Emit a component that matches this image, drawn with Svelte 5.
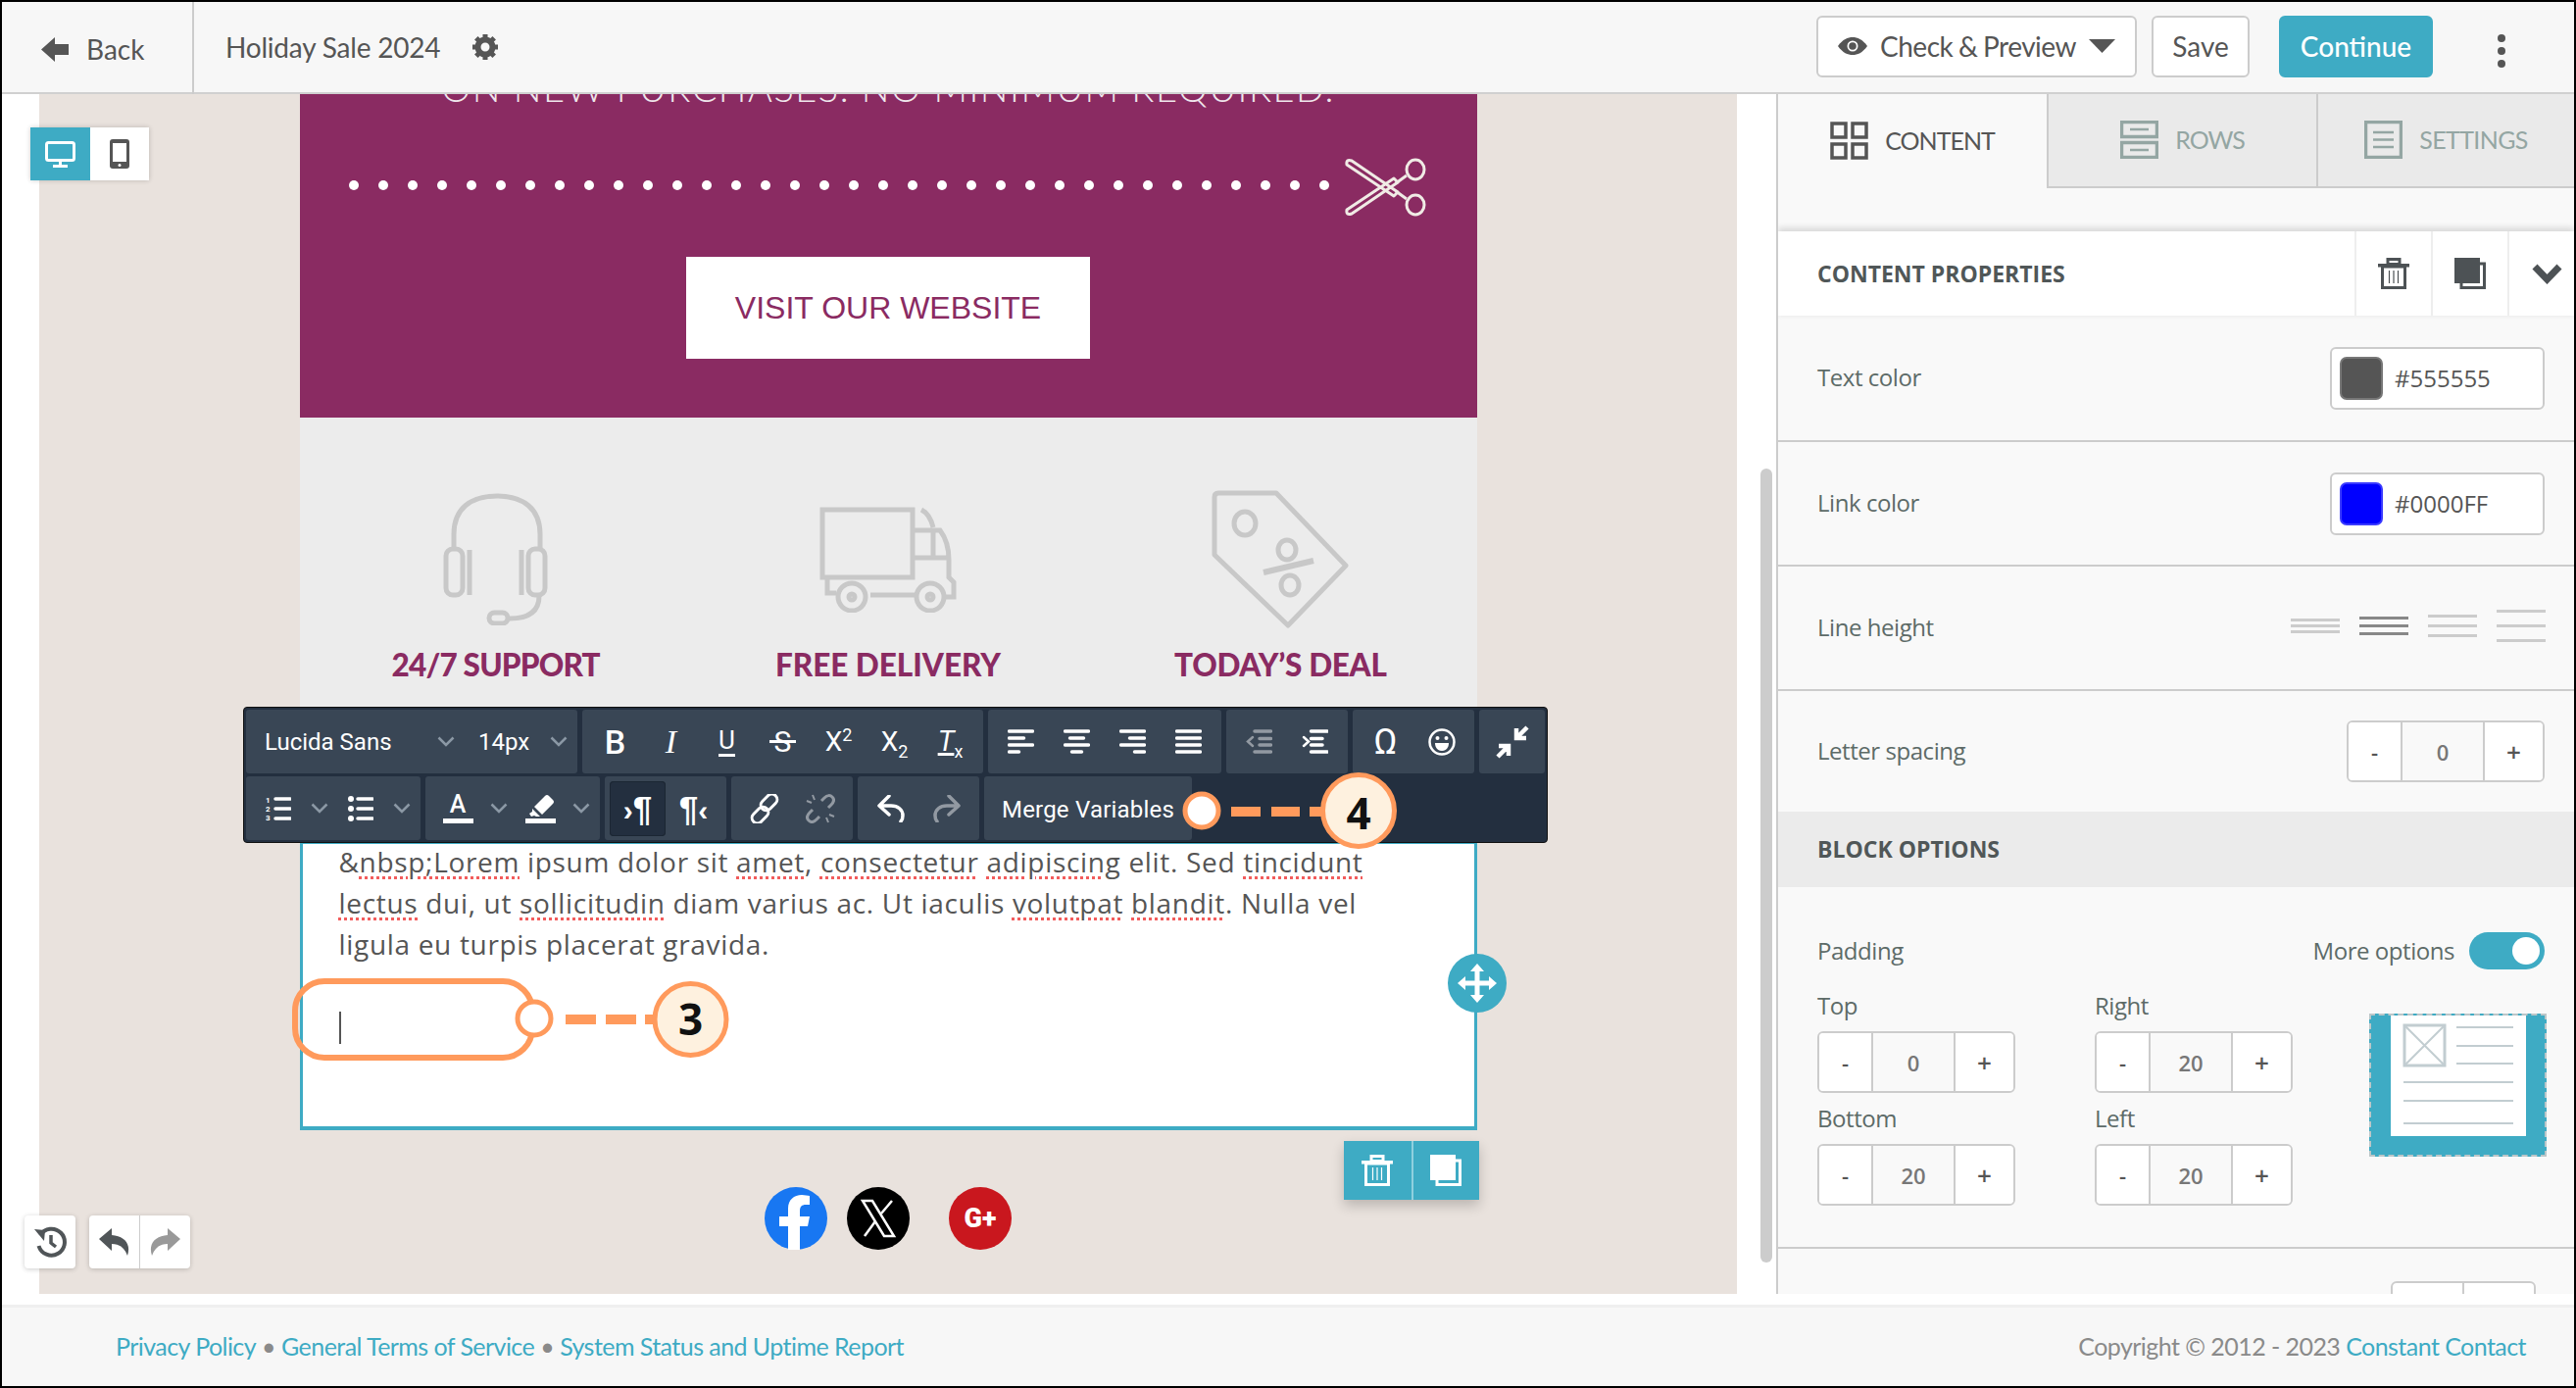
<script>
	const dots = Array.from({ length: 34 });
	const gearTeeth = [0, 45, 90, 135, 180, 225, 270, 315];

	// each icon is a list of [x1, x2] lines
	const alignIcons = [
		[[0, 27], [0, 18], [0, 27], [0, 13]],
		[[0, 27], [5, 22], [0, 27], [7, 20]],
		[[0, 27], [9, 27], [0, 27], [14, 27]],
		[[0, 27], [0, 27], [0, 27], [0, 27]]
	];

	const lineHeights = [
		{ gap: 3, active: false },
		{ gap: 5, active: true },
		{ gap: 7, active: false },
		{ gap: 12, active: false }
	];

	const paddingFields = [
		{ label: 'Top', value: 0 },
		{ label: 'Right', value: 20 },
		{ label: 'Bottom', value: 20 },
		{ label: 'Left', value: 20 }
	];
</script>

{#snippet chevron()}
	<svg class="chev" viewBox="0 0 18 11" width="18" height="11"><path d="M1.500 1.500 9 9l7.500-7.500" /></svg>
{/snippet}

{#snippet trash()}
	<svg viewBox="0 0 32 32" width="32" height="32" class="trash">
		<rect x="10" y="1.500" width="12" height="5" fill="none" stroke="currentColor" stroke-width="3" />
		<rect x="0" y="6" width="32" height="3.500" fill="currentColor" />
		<rect x="4.500" y="9" width="23" height="21.500" fill="none" stroke="currentColor" stroke-width="3" />
		<path d="M11.500 13v13M16 13v13M20.500 13v13" stroke="currentColor" stroke-width="1.200" />
	</svg>
{/snippet}

{#snippet copy()}
	<svg viewBox="0 0 32 32" width="32" height="32">
		<path d="M26 6h4.500v24.500H7V26" fill="none" stroke="currentColor" stroke-width="3" />
		<rect x="0" y="0" width="26" height="26" fill="currentColor" />
	</svg>
{/snippet}

{#snippet stepper(value)}
	<div class="stepper">
		<span class="step minus">-</span>
		<span class="step-value">{value}</span>
		<span class="step plus">+</span>
	</div>
{/snippet}

{#snippet replyArrow()}
	<svg viewBox="0 0 32 28" width="32" height="28"><path d="M0 11 13 0v7c13 1 20 9 16 21-3-8-8-12-16-12v7z" fill="currentColor" /></svg>
{/snippet}

<div class="app">
	<header class="topbar">
		<a class="back">
			<svg viewBox="0 0 28 25" width="28" height="25"><path d="M0 12.500 14 0v7h14v11H14v7z" fill="#555" /></svg>
			Back
		</a>
		<div class="title">
			<span>Holiday Sale 2024</span>
			<svg viewBox="0 0 26 26" width="26" height="26">
				<circle cx="13" cy="13" r="7.500" fill="none" stroke="#555" stroke-width="6" />
				{#each gearTeeth as deg}
					<rect x="10.500" y="0" width="5" height="5" fill="#555" transform="rotate({deg} 13 13)" />
				{/each}
			</svg>
		</div>
		<div class="actions">
			<button class="btn preview">
				<svg viewBox="0 0 30 18" width="30" height="18">
					<path d="M0 9C5 2 10 0 15 0s10 2 15 9c-5 7-10 9-15 9S5 16 0 9z" fill="#555" />
					<circle cx="15" cy="9" r="5.500" fill="#fff" />
					<circle cx="15" cy="9" r="3.800" fill="#555" />
				</svg>
				<span class="preview-label">Check &amp; Preview</span>
				<svg viewBox="0 0 27 14" width="27" height="14"><path d="M0 0h27L13.500 14z" fill="#555" /></svg>
			</button>
			<button class="btn save">Save</button>
			<button class="btn continue">Continue</button>
			<div class="kebab"><i></i><i></i><i></i></div>
		</div>
	</header>

	<div class="main">
		<div class="gutter-left"></div>

		<div class="canvas">
			<div class="email">
				<section class="coupon">
					<p class="coupon-text">ON NEW PURCHASES. NO MINIMUM REQUIRED.</p>
					<div class="cut-line">
						<div class="dots">
							{#each dots as _}<i></i>{/each}
						</div>
						<svg viewBox="0 0 87 62" width="87" height="62" class="scissors">
							<path d="M4 8Q3 2 9 4L56 36 52 40zM4 54Q3 60 9 58L56 26 52 22z" fill="none" stroke="#f0ebe5" stroke-width="3" stroke-linejoin="round" />
							<path d="M54 27 65 19M54 35 65 43" stroke="#f0ebe5" stroke-width="3" />
							<ellipse cx="74" cy="13" rx="9" ry="10" fill="none" stroke="#f0ebe5" stroke-width="3" />
							<ellipse cx="74" cy="49" rx="9" ry="10" fill="none" stroke="#f0ebe5" stroke-width="3" />
						</svg>
					</div>
					<a class="visit">VISIT OUR WEBSITE</a>
				</section>

				<section class="perks">
					<div class="perk">
						<div class="perk-icon">
							<svg viewBox="0 0 107 135" width="107" height="135" class="line-icon">
								<path d="M11 57V42C11 16 28 3 55 3s44 13 44 39v15" />
								<rect x="3" y="57" width="17" height="47" rx="7" />
								<path d="M27 58v46M80 58v46" />
								<rect x="87" y="57" width="17" height="47" rx="7" />
								<path d="M98 105c0 15-10 23-30 23" />
								<rect x="47" y="122" width="19" height="11" rx="5.500" />
							</svg>
						</div>
						<h3>24/7 SUPPORT</h3>
					</div>
					<div class="perk">
						<div class="perk-icon">
							<svg viewBox="0 0 140 108" width="140" height="108" class="line-icon">
								<rect x="3" y="3" width="92" height="69" />
								<path d="M104 3c6 3 10 10 12 18M95 24h28c6 8 9 18 9 30v18l5 5v15h-10M95 52h37M116 24v28M8 72v16h9M52 90h48" />
								<ellipse cx="33" cy="92" rx="14" ry="14" />
								<ellipse cx="113" cy="92" rx="14" ry="14" />
								<circle cx="33" cy="92" r="3" />
								<circle cx="113" cy="92" r="3" />
							</svg>
						</div>
						<h3>FREE DELIVERY</h3>
					</div>
					<div class="perk">
						<div class="perk-icon">
							<svg viewBox="0 0 141 141" width="141" height="141" class="line-icon">
								<path d="M3 7Q3 3 7 3h59l71 74-59 61L3 66z" stroke-linejoin="round" />
								<ellipse cx="34" cy="34" rx="11" ry="12" />
								<ellipse cx="77" cy="61" rx="9" ry="10" />
								<ellipse cx="80" cy="97" rx="9" ry="10" />
								<path d="M53 84l51-12" stroke-width="6" />
							</svg>
						</div>
						<h3>TODAY’S DEAL</h3>
					</div>
				</section>

				<section class="block">
					<p class="lorem">&amp;<span class="sp">nbsp;Lorem</span> ipsum dolor sit <span class="sp">amet</span>, <span class="sp">consectetur</span> <span class="sp">adipiscing</span> elit. Sed <span class="sp">tincidunt</span> <span class="sp">lectus</span> dui, ut <span class="sp">sollicitudin</span> diam varius ac. Ut iaculis <span class="sp">volutpat</span> <span class="sp">blandit</span>. Nulla vel ligula eu turpis placerat gravida.</p>
					<div class="caret"></div>

					<div class="move-handle">
						<svg viewBox="0 0 40 40" width="40" height="40">
							<path d="M20 0l7 8h-4.500v9.500H32V13l8 7-8 7v-4.500h-9.500V32H27l-7 8-7-8h4.500v-9.500H8V27l-8-7 8-7v4.500h9.500V8H13z" fill="#fff" />
						</svg>
					</div>
					<div class="block-actions">
						<span>{@render trash()}</span>
						<span>{@render copy()}</span>
					</div>
				</section>

				<div class="social">
					<svg viewBox="0 0 64 64" width="64" height="64">
						<circle cx="32" cy="32" r="32" fill="#1877f2" />
						<path d="M36 64V40h8l2-10H36v-6c0-4 2-6 6-6h4V9c-2 0-5-1-8-1-8 0-14 5-14 14v8h-9v10h9v24z" fill="#fff" />
					</svg>
					<svg viewBox="0 0 64 64" width="64" height="64">
						<circle cx="32" cy="32" r="32" fill="#000" />
						<path d="M16 14h10l22 36H38z" fill="none" stroke="#fff" stroke-width="2.500" />
						<path d="M46 14 35 27M29 35 18 50" stroke="#fff" stroke-width="2.500" />
					</svg>
					<div class="gplus">G+</div>
				</div>
			</div>
		</div>

		<div class="gutter-right"><div class="scrollbar"></div></div>

		<aside class="panel">
			<nav class="tabs">
				<div class="tab active">
					<svg viewBox="0 0 39 39" width="39" height="39" class="tab-icon">
						<rect x="2" y="2" width="14" height="14" /><rect x="23" y="2" width="14" height="14" />
						<rect x="2" y="23" width="14" height="14" /><rect x="23" y="23" width="14" height="14" />
					</svg>
					CONTENT
				</div>
				<div class="tab rows">
					<svg viewBox="0 0 39 39" width="39" height="39" class="tab-icon">
						<rect x="1.500" y="1.500" width="36" height="15" /><rect x="1.500" y="22.500" width="36" height="15" />
						<path d="M10 9h19M10 30h19" stroke-width="2.500" />
					</svg>
					ROWS
				</div>
				<div class="tab settings">
					<svg viewBox="0 0 39 39" width="39" height="39" class="tab-icon">
						<rect x="1.500" y="1.500" width="36" height="36" />
						<path d="M9 12h21M9 19.500h21M9 27h21" stroke-width="2.500" />
					</svg>
					SETTINGS
				</div>
			</nav>

			<div class="props-head">
				<strong>CONTENT PROPERTIES</strong>
				<div class="head-tools">
					<span>{@render trash()}</span>
					<span>{@render copy()}</span>
					<span>
						<svg viewBox="0 0 31 22" width="31" height="22"><path d="M3 4l12.500 13L28 4" fill="none" stroke="#4d5255" stroke-width="7" /></svg>
					</span>
				</div>
			</div>

			<div class="prop-row first">
				<label>Text color</label>
				<div class="color-input"><i class="swatch gray"></i>#555555</div>
			</div>
			<div class="prop-row">
				<label>Link color</label>
				<div class="color-input"><i class="swatch blue"></i>#0000FF</div>
			</div>
			<div class="prop-row">
				<label>Line height</label>
				<div class="line-heights">
					{#each lineHeights as lh}
						<div class="lh" class:active={lh.active} style="gap: {lh.gap}px"><i></i><i></i><i></i></div>
					{/each}
				</div>
			</div>
			<div class="prop-row last">
				<label>Letter spacing</label>
				{@render stepper(0)}
			</div>

			<div class="section-head">BLOCK OPTIONS</div>

			<div class="block-body">
				<div class="padding-head">
					<label>Padding</label>
					<div class="more"><label>More options</label> <span class="toggle"><i></i></span></div>
				</div>
				<div class="padding-grid">
					<div class="fields">
						{#each paddingFields as field}
							<div>
								<label>{field.label}</label>
								{@render stepper(field.value)}
							</div>
						{/each}
					</div>
					<div class="preview-box">
						<div class="sheet">
							<svg viewBox="0 0 138 123" width="138" height="123">
								<g fill="none" stroke="#c2cdd1" stroke-width="2">
									<rect x="14" y="10" width="41" height="41" stroke-width="3" />
									<path d="M14 10l41 41M55 10 14 51" />
									<path d="M67 12h58M67 31h58M67 49h58M13 68h112M13 87h112M13 110h112" />
								</g>
							</svg>
						</div>
					</div>
				</div>
			</div>

			<div class="cut-stepper"><span></span><span></span></div>
		</aside>

		<div class="device-toggle">
			<span class="on">
				<svg viewBox="0 0 31 27" width="31" height="27">
					<rect x="1.500" y="1.500" width="28" height="18" rx="2" fill="none" stroke="#fff" stroke-width="3" />
					<path d="M15.500 20v4M8 25.500h15" stroke="#fff" stroke-width="3" />
				</svg>
			</span>
			<span>
				<svg viewBox="0 0 20 30" width="20" height="30">
					<rect x="0" y="0" width="20" height="30" rx="3" fill="#555" />
					<rect x="3" y="4" width="14" height="19" fill="#fff" />
					<circle cx="10" cy="26.500" r="1.500" fill="#fff" />
				</svg>
			</span>
		</div>

		<div class="history">
			<div class="hist-btn">
				<svg viewBox="0 0 33 32" width="33" height="32">
					<path d="M6 9a13.500 13.500 0 1 1-1.500 11" fill="none" stroke="#505558" stroke-width="4" />
					<path d="M0 3l11 1-1 11z" fill="#505558" />
					<path d="M17 9v8l5 4" fill="none" stroke="#505558" stroke-width="3.500" />
				</svg>
			</div>
			<div class="hist-pair">
				<span class="undo">{@render replyArrow()}</span>
				<span class="redo">{@render replyArrow()}</span>
			</div>
		</div>

		<div class="toolbar">
			<div class="tb-row">
				<div class="tb-group fonts">
					<span class="font-name">Lucida Sans</span>{@render chevron()}
					<span class="font-size">14px</span>{@render chevron()}
				</div>
				<div class="tb-group">
					<span class="tb"><b class="glyph big">B</b></span>
					<span class="tb"><i class="glyph serif">I</i></span>
					<span class="tb"><span class="glyph under">U</span></span>
					<span class="tb"><span class="glyph strike">S</span></span>
					<span class="tb"><span class="glyph cap">X<sup>2</sup></span></span>
					<span class="tb"><span class="glyph cap">X<sub>2</sub></span></span>
					<span class="tb"><span class="glyph tx"><em>T</em><sub>x</sub></span></span>
				</div>
				<div class="tb-group">
					{#each alignIcons as lines}
						<span class="tb">
							<svg viewBox="0 0 27 25" width="27" height="25" class="tb-lines">
								{#each lines as line, i}
									<path d="M{line[0] + 1.500} {2 + i * 7}H{line[1] - 1.500}" />
								{/each}
							</svg>
						</span>
					{/each}
				</div>
				<div class="tb-group">
					<span class="tb muted">
						<svg viewBox="0 0 27 25" width="27" height="25" class="tb-lines">
							<path d="M9 2h16.500M14 9.500h11.500M14 16h11.500M9 23h16.500" />
							<path d="M7 8 2 12.500 7 17" stroke-width="2.500" />
						</svg>
					</span>
					<span class="tb">
						<svg viewBox="0 0 27 25" width="27" height="25" class="tb-lines">
							<path d="M1.500 2H18M1.500 9.500H13M1.500 16H13M1.500 23H18" transform="translate(8 0)" />
							<path d="M2 8l5 4.500L2 17" stroke-width="2.500" />
						</svg>
					</span>
				</div>
				<div class="tb-group">
					<span class="tb"><span class="glyph omega">Ω</span></span>
					<span class="tb">
						<svg viewBox="0 0 28 28" width="28" height="28">
							<circle cx="14" cy="14" r="12.500" fill="none" stroke="#fff" stroke-width="2.500" />
							<circle cx="9.500" cy="10" r="2" fill="#fff" /><circle cx="18.500" cy="10" r="2" fill="#fff" />
							<path d="M7 15h14c0 5-3 8-7 8s-7-3-7-8z" fill="#fff" />
						</svg>
					</span>
				</div>
				<div class="tb-group">
					<span class="tb">
						<svg viewBox="0 0 34 34" width="34" height="34">
							<path d="M21 13 32 2M21 3v10h10M13 21 2 32M3 21h10v10" fill="none" stroke="#fff" stroke-width="4.500" />
						</svg>
					</span>
				</div>
			</div>
			<div class="tb-row">
				<div class="tb-group narrow">
					<span class="tb-icon">
						<svg viewBox="0 0 26 26" width="26" height="26">
							<path d="M10 3h15M10 13h15M10 23h15" stroke="#fff" stroke-width="3.500" stroke-linecap="round" />
							<text x="0" y="7" class="mini">1</text><text x="0" y="16" class="mini">2</text><text x="0" y="25" class="mini">3</text>
						</svg>
					</span>
					{@render chevron()}
					<span class="tb-icon">
						<svg viewBox="0 0 26 26" width="26" height="26">
							<path d="M10 3h15M10 13h15M10 23h15" stroke="#fff" stroke-width="3.500" stroke-linecap="round" />
							<circle cx="3" cy="3" r="3" fill="#fff" /><circle cx="3" cy="13" r="3" fill="#fff" /><circle cx="3" cy="23" r="3" fill="#fff" />
						</svg>
					</span>
					{@render chevron()}
				</div>
				<div class="tb-group narrow">
					<span class="tb-icon color-a"><span>A</span><i></i></span>
					{@render chevron()}
					<span class="tb-icon">
						<svg viewBox="0 0 31 30" width="31" height="30">
							<path d="M9 13 20 2q2-2 4 0l4 4q2 2 0 4L17 21zM7 15l8 8-4 0-2-1-3 1-2-3 3-2z" fill="#fff" />
							<rect x="0" y="25" width="31" height="5" fill="#fff" />
						</svg>
					</span>
					{@render chevron()}
				</div>
				<div class="tb-group">
					<span class="tb active"><span class="pilcrow"><small>›</small>¶</span></span>
					<span class="tb"><span class="pilcrow">¶<small>‹</small></span></span>
				</div>
				<div class="tb-group">
					<span class="tb">
						<svg viewBox="0 0 30 30" width="30" height="30" class="chain">
							<rect x="14" y="-1" width="11" height="19" rx="5.500" transform="rotate(45 19.500 8.500)" />
							<rect x="5" y="12" width="11" height="19" rx="5.500" transform="rotate(45 10.500 21.500)" />
						</svg>
					</span>
					<span class="tb muted">
						<svg viewBox="0 0 30 30" width="30" height="30" class="chain">
							<path d="M16 7l3-3c3-3 6-3 8-1s2 5-1 8l-3 3M14 23l-3 3c-3 3-6 3-8 1s-2-5 1-8l3-3" />
							<path d="M7 1l2 5M1 7l5 2M23 29l-2-5M29 23l-5-2" stroke-width="2" />
						</svg>
					</span>
				</div>
				<div class="tb-group">
					<span class="tb">
						<svg viewBox="0 0 28 28" width="28" height="28" class="arrow">
							<path d="M12 1 2 11l10 9M2 11h12c7 0 12 4 12 10 0 3-1 5-2 6" />
						</svg>
					</span>
					<span class="tb muted">
						<svg viewBox="0 0 28 28" width="28" height="28" class="arrow">
							<path d="M16 1l10 10-10 9M26 11H14C7 11 2 15 2 21c0 3 1 5 2 6" />
						</svg>
					</span>
				</div>
				<div class="tb-group merge">Merge Variables</div>
			</div>
		</div>

		<svg class="callouts" viewBox="0 0 2628 1416" width="2628" height="1416">
			<rect x="301" y="1003" width="242" height="78" rx="30" fill="none" stroke="#ff9a5c" stroke-width="6" />
			<circle cx="545" cy="1041" r="17" fill="#fff" stroke="#ff9a5c" stroke-width="5" />
			<rect x="577" y="1037" width="31" height="10" fill="#ff9a5c" />
			<rect x="618" y="1037" width="31" height="10" fill="#ff9a5c" />
			<rect x="658" y="1037" width="12" height="10" fill="#ff9a5c" />
			<circle cx="704.500" cy="1042" r="36.500" fill="#fef1df" stroke="#ff9a5c" stroke-width="5" />
			<text x="704.500" y="1058" class="callout-num">3</text>

			<circle cx="1226" cy="829" r="17" fill="#fff" stroke="#ff9a5c" stroke-width="5" />
			<rect x="1256" y="825" width="30" height="10" fill="#ff9a5c" />
			<rect x="1297" y="825" width="29" height="10" fill="#ff9a5c" />
			<rect x="1336" y="825" width="12" height="10" fill="#ff9a5c" />
			<circle cx="1386" cy="829" r="36.500" fill="#fef1df" stroke="#ff9a5c" stroke-width="5" />
			<text x="1386" y="848" class="callout-num">4</text>
		</svg>
	</div>

	<footer class="footer">
		<div class="links">
			<a>Privacy Policy</a><span class="sep">•</span><a>General Terms of Service</a><span class="sep">•</span><a>System Status and Uptime Report</a>
		</div>
		<div class="copyright">Copyright © 2012 - 2023 <a>Constant Contact</a></div>
	</footer>
</div>

<style>
	:global(body) {
		margin: 0;
		background: #fff;
	}

	.app {
		width: 2628px;
		height: 1416px;
		box-sizing: border-box;
		border: 2px solid #000;
		display: flex;
		flex-direction: column;
		overflow: hidden;
		font-family: 'Open Sans', sans-serif;
		color: #555;
		background: #fff;
	}

	/* top bar */
	.topbar {
		height: 94px;
		flex: none;
		box-sizing: border-box;
		border-bottom: 2px solid #d0d0d0;
		background: #f7f7f7;
		display: flex;
		align-items: stretch;
		font-family: Lato, sans-serif;
		font-size: 28px;
	}

	.back {
		width: 196px;
		box-sizing: border-box;
		padding: 2px 0 0 40px;
		display: flex;
		align-items: center;
		gap: 18px;
		border-right: 2px solid #ccc;
		margin-bottom: -2px;
	}

	.title {
		padding-left: 32px;
		display: flex;
		align-items: center;
		gap: 33px;
		letter-spacing: -0.2px;
	}

	.actions {
		margin-left: auto;
		display: flex;
		align-items: center;
		padding-right: 70px;
	}

	.btn {
		font: inherit;
		color: #555;
		background: #fff;
		border: 2px solid #ccc;
		border-radius: 6px;
		height: 63px;
		padding: 0;
		display: flex;
		align-items: center;
		justify-content: center;
		margin-top: -2px;
	}

	.preview {
		width: 327px;
		gap: 13px;
	}

	.preview-label {
		letter-spacing: -0.5px;
		word-spacing: -1px;
	}

	.save {
		width: 100px;
		margin-left: 15px;
	}

	.continue {
		width: 157px;
		margin-left: 30px;
		background: #3eabc4;
		border-color: #3eabc4;
		color: #fff;
		font-weight: 500;
	}

	.kebab {
		margin-left: 66px;
		margin-top: 8px;
		display: flex;
		flex-direction: column;
		gap: 5px;
	}

	.kebab i {
		width: 8px;
		height: 8px;
		border-radius: 50%;
		background: #555;
	}

	/* main area */
	.main {
		position: relative;
		height: 1224px;
		flex: none;
		display: flex;
	}

	.gutter-left {
		width: 38px;
		flex: none;
	}

	.canvas {
		width: 1732px;
		flex: none;
		overflow: hidden;
		background: #e9e2dd;
	}

	.gutter-right {
		width: 40px;
		flex: none;
		padding: 382px 0 0 24px;
		box-sizing: border-box;
	}

	.scrollbar {
		width: 12px;
		height: 810px;
		border-radius: 6px;
		background: #ccc;
	}

	/* email */
	.email {
		width: 1201px;
		margin: -30px auto 0;
	}

	.coupon {
		background: #8a2b62;
		height: 360px;
		display: flex;
		flex-direction: column;
		align-items: center;
	}

	.coupon-text {
		margin: 0;
		height: 46px;
		line-height: 46px;
		font-family: Lato, sans-serif;
		font-weight: 300;
		font-size: 38px;
		letter-spacing: 1.500px;
		color: #efe6ec;
		white-space: nowrap;
	}

	.cut-line {
		margin-top: 48px;
		width: 100%;
		box-sizing: border-box;
		padding-left: 50px;
		display: flex;
		align-items: flex-start;
	}

	.dots {
		display: flex;
		gap: 20px;
		margin-top: 24px;
		width: 1014px;
	}

	.dots i {
		flex: none;
		width: 10px;
		height: 10px;
		border-radius: 50%;
		background: #fff;
	}

	.visit {
		margin-top: 40px;
		width: 412px;
		height: 104px;
		background: #fff;
		color: #8a2b62;
		display: flex;
		align-items: center;
		justify-content: center;
		font-family: 'Liberation Sans', Arial, sans-serif;
		font-size: 32px;
	}

	.perks {
		background: #ececec;
		height: 432px;
		display: grid;
		grid-template-columns: repeat(3, 1fr);
		padding-top: 74px;
		box-sizing: border-box;
	}

	.perk {
		text-align: center;
	}

	.perk-icon {
		height: 141px;
		display: flex;
		align-items: center;
		justify-content: center;
	}

	.line-icon {
		fill: none;
		stroke: #c8c8c8;
		stroke-width: 5;
	}

	.perk h3 {
		margin: 19px 0 0;
		color: #8a2b62;
		font-family: Lato, sans-serif;
		font-weight: 900;
		font-size: 31.500px;
		line-height: 36px;
	}

	.perk:first-child h3 {
		letter-spacing: -0.800px;
	}

	.perk:last-child h3 {
		letter-spacing: -0.300px;
	}

	.block {
		position: relative;
		height: 295px;
		box-sizing: border-box;
		background: #fff;
		border: 3px solid #3eabc4;
		border-bottom-width: 4px;
		padding: 0 40px 0 37px;
	}

	.lorem {
		margin: -3px 0 0;
		width: 1052px;
		font-size: 28px;
		letter-spacing: 0.680px;
		line-height: 42px;
		color: #555;
	}

	.sp {
		text-decoration: underline dotted #f25c5c 3px;
		text-underline-offset: 4px;
	}

	.caret {
		margin-top: 48px;
		width: 2px;
		height: 33px;
		background: #555;
	}

	.move-handle {
		position: absolute;
		right: -33px;
		top: 112px;
		width: 60px;
		height: 60px;
		border-radius: 50%;
		background: #3eabc4;
		display: flex;
		align-items: center;
		justify-content: center;
	}

	.block-actions {
		position: absolute;
		right: -5px;
		top: calc(100% + 15px);
		height: 60px;
		display: flex;
		color: #fff;
		background: #3eabc4;
		box-shadow: 0 6px 12px rgba(0, 0, 0, 0.2);
	}

	.block-actions span {
		width: 69px;
		box-sizing: border-box;
		display: flex;
		align-items: center;
		justify-content: center;
	}

	.block-actions span + span {
		border-left: 2px solid #8fd0df;
	}

	.social {
		margin-top: 58px;
		display: flex;
		justify-content: center;
		gap: 20px;
	}

	.gplus {
		width: 64px;
		height: 64px;
		margin-left: 20px;
		border-radius: 50%;
		background: #c9171e;
		color: #fff;
		font-family: Roboto, sans-serif;
		font-weight: 900;
		font-size: 27px;
		display: flex;
		align-items: center;
		justify-content: center;
	}

	/* side panel */
	.panel {
		flex: 1;
		min-width: 0;
		overflow: hidden;
		border-left: 2px solid #ccc;
		background: #f9f9f9;
		color: #5d6b68;
		font-size: 24px;
	}

	.panel label {
		letter-spacing: -0.450px;
	}

	.tabs {
		height: 96px;
		display: flex;
		font-family: Lato, sans-serif;
		font-size: 25px;
		letter-spacing: -1px;
	}

	.tab {
		flex: 1;
		box-sizing: border-box;
		display: flex;
		align-items: center;
		justify-content: center;
		gap: 17px;
		padding-bottom: 2px;
		background: #eaeaea;
		color: #94a6a3;
		border-bottom: 2px solid #ccc;
		border-left: 2px solid #ccc;
	}

	.tab.rows {
		flex: none;
		width: 275px;
	}

	.tab.settings {
		letter-spacing: -0.600px;
	}

	.tab.active {
		background: #f9f9f9;
		color: #555;
		border-bottom: none;
		border-left: none;
		flex: none;
		width: 274px;
	}

	.tab-icon {
		fill: none;
		stroke: currentColor;
		stroke-width: 3.500;
		flex: none;
	}

	.props-head {
		margin-top: 44px;
		height: 86px;
		background: #fff;
		display: flex;
		align-items: center;
		padding-left: 40px;
		color: #505758;
		box-shadow: 0 -4px 6px rgba(0, 0, 0, 0.12), 0 2px 4px rgba(0, 0, 0, 0.04);
		font-size: 23px;
	}

	.head-tools {
		margin-left: auto;
		display: flex;
		height: 100%;
		color: #4d5255;
	}

	.head-tools span {
		width: 78px;
		box-sizing: border-box;
		border-left: 2px solid #eee;
		display: flex;
		align-items: center;
		justify-content: center;
	}

	.head-tools span:last-child {
		width: 68px;
		justify-content: flex-start;
		padding-left: 23px;
	}

	.prop-row {
		height: 127px;
		box-sizing: border-box;
		border-bottom: 2px solid #ccc;
		display: flex;
		align-items: center;
		justify-content: space-between;
		padding: 0 30px 0 40px;
	}

	.prop-row label {
		margin-top: -2px;
	}

	.prop-row.first {
		height: 129px;
	}

	.prop-row.last {
		height: 123px;
		border-bottom: none;
	}

	.color-input {
		width: 219px;
		height: 64px;
		box-sizing: border-box;
		border: 2px solid #ccc;
		border-radius: 6px;
		background: #fff;
		display: flex;
		align-items: center;
		gap: 12px;
		padding-left: 8px;
		color: #555;
		line-height: 1;
	}

	.swatch {
		width: 44px;
		height: 44px;
		box-sizing: border-box;
		border-radius: 7px;
		border: 2px solid;
	}

	.swatch.gray {
		background: #555;
		border-color: #777;
	}

	.swatch.blue {
		background: #0000ff;
		border-color: #3a3aff;
	}

	.line-heights {
		display: flex;
		gap: 20px;
		margin-right: -1px;
		height: 32px;
		align-items: center;
	}

	.lh {
		width: 50px;
		display: flex;
		flex-direction: column;
		margin-top: -4px;
	}

	.lh i {
		height: 3px;
		background: #ccc;
	}

	.lh.active i {
		background: #888;
	}

	.stepper {
		width: 202px;
		height: 63px;
		box-sizing: border-box;
		border: 2px solid #ccc;
		border-radius: 6px;
		display: flex;
		font-weight: 600;
		font-size: 22px;
		color: #777;
		overflow: hidden;
	}

	.stepper span {
		display: flex;
		align-items: center;
		justify-content: center;
	}

	.step {
		background: #fff;
		color: #555;
	}

	.minus {
		width: 53px;
		border-right: 2px solid #ccc;
	}

	.plus {
		width: 59px;
		border-left: 2px solid #ccc;
		font-size: 26px;
	}

	.step-value {
		flex: 1;
	}

	.section-head {
		height: 77px;
		background: #ebebeb;
		display: flex;
		align-items: center;
		padding: 0 0 2px 40px;
		box-sizing: border-box;
		font-weight: 700;
		font-size: 23px;
		color: #505758;
	}

	.block-body {
		height: 369px;
		box-sizing: border-box;
		padding: 45px 30px 0 40px;
		border-bottom: 2px solid #ccc;
	}

	.padding-head {
		height: 38px;
		display: flex;
		align-items: center;
		justify-content: space-between;
	}

	.more {
		display: flex;
		align-items: center;
		gap: 15px;
	}

	.toggle {
		width: 77px;
		height: 38px;
		margin-top: 2px;
		border-radius: 19px;
		background: #3eabc4;
		display: flex;
		align-items: center;
		justify-content: flex-end;
		padding-right: 5px;
		box-sizing: border-box;
	}

	.toggle i {
		width: 28px;
		height: 28px;
		border-radius: 50%;
		background: #fff;
	}

	.padding-grid {
		display: flex;
		justify-content: space-between;
		margin-top: 23px;
	}

	.fields {
		display: grid;
		grid-template-columns: 202px 202px;
		column-gap: 81px;
		row-gap: 11px;
	}

	.fields label {
		display: block;
		height: 30px;
		line-height: 30px;
		margin-bottom: 11px;
	}

	.preview-box {
		margin: 23px -2px 0 0;
		width: 181px;
		height: 146px;
		box-sizing: border-box;
		border: 2px dashed #bcc6c8;
		background: #3eabc4;
		display: flex;
		justify-content: center;
	}

	.sheet {
		width: 138px;
		height: 123px;
		background: #fff;
	}

	.sheet svg {
		display: block;
	}

	.cut-stepper {
		margin: 33px 0 0 625px;
		width: 148px;
		height: 62px;
		box-sizing: border-box;
		border: 2px solid #ccc;
		border-radius: 6px;
		background: #fff;
		display: flex;
	}

	.cut-stepper span {
		flex: 1;
	}

	.cut-stepper span + span {
		border-left: 2px solid #ccc;
	}

	/* floating controls */
	.device-toggle {
		position: absolute;
		left: 29px;
		top: 34px;
		height: 54px;
		display: flex;
		background: #fff;
		box-shadow: 0 0 5px rgba(0, 0, 0, 0.2);
	}

	.device-toggle span {
		width: 60.500px;
		display: flex;
		align-items: center;
		justify-content: center;
	}

	.device-toggle .on {
		background: #3eabc4;
	}

	.history {
		position: absolute;
		left: 23px;
		top: 1144px;
		display: flex;
		gap: 14px;
	}

	.hist-btn,
	.hist-pair {
		height: 54px;
		background: #fff;
		border-radius: 4px;
		box-shadow: 0 1px 5px rgba(0, 0, 0, 0.2);
		display: flex;
		align-items: center;
		justify-content: center;
	}

	.hist-btn {
		width: 52px;
	}

	.hist-pair span {
		width: 51px;
		height: 100%;
		display: flex;
		align-items: center;
		justify-content: center;
	}

	.undo {
		color: #505558;
		border-right: 1px solid #ccc;
	}

	.redo {
		color: #999;
		transform: scaleX(-1);
	}

	/* editor toolbar */
	.toolbar {
		position: absolute;
		left: 246px;
		top: 625px;
		width: 1331px;
		height: 139px;
		box-sizing: border-box;
		padding: 2px;
		background: #232f3f;
		border: 1px solid #111;
		border-radius: 4px;
		font-family: Roboto, sans-serif;
		color: #fff;
		display: flex;
		flex-direction: column;
		gap: 3px;
	}

	.tb-row {
		height: 66px;
		display: flex;
		gap: 5px;
	}

	.tb-group {
		background: #394655;
		border-radius: 3px;
		padding: 0 5px;
		display: flex;
		align-items: center;
		flex: none;
	}

	.tb-group.narrow {
		width: 178px;
		box-sizing: border-box;
		padding: 0 0 0 16px;
		gap: 16px;
	}

	.tb-group.fonts {
		width: 338px;
		box-sizing: border-box;
		padding: 0 0 0 19px;
	}

	.font-name {
		width: 176px;
		font-size: 24px;
	}

	.font-size {
		padding-left: 24px;
		width: 52px;
		font-size: 24px;
		margin-right: 21px;
	}

	.chev {
		flex: none;
		fill: none;
		stroke: #8b98a5;
		stroke-width: 2.500;
	}

	.tb {
		width: 57px;
		height: 56px;
		border-radius: 4px;
		display: flex;
		align-items: center;
		justify-content: center;
		flex: none;
	}

	.tb.active {
		background: #232f3f;
		box-shadow: inset 0 0 0 1px #1b2633;
	}

	.tb.muted {
		opacity: 0.45;
	}

	.glyph {
		font-size: 30px;
		line-height: 1;
		font-style: normal;
		font-weight: 400;
	}

	.glyph.big {
		font-size: 34px;
		font-weight: 500;
	}

	.glyph.serif {
		font-family: 'Liberation Serif', serif;
		font-style: italic;
		font-size: 34px;
	}

	.glyph.under {
		border-bottom: 3px solid #fff;
		font-size: 26px;
		padding-bottom: 1px;
	}

	.glyph.strike {
		padding: 0 5px;
		background: linear-gradient(#fff, #fff) center / 100% 3px no-repeat;
	}

	.glyph.cap {
		font-size: 28px;
	}

	.glyph.tx {
		font-size: 29px;
		border-bottom: 0;
		position: relative;
	}

	.glyph.tx em {
		font-style: italic;
		text-decoration: underline 3px;
		text-underline-offset: 2px;
	}

	.glyph sup,
	.glyph sub {
		font-size: 18px;
		line-height: 0;
	}

	.omega {
		font-size: 36px;
	}

	.tb-lines {
		fill: none;
		stroke: #fff;
		stroke-width: 3.500;
		stroke-linecap: round;
	}

	.tb-icon {
		display: flex;
		align-items: center;
		justify-content: center;
		width: 34px;
		flex: none;
	}

	.mini {
		font-size: 8px;
		fill: #fff;
		font-weight: 700;
	}

	.color-a {
		flex-direction: column;
		font-size: 25px;
		line-height: 24px;
		font-weight: 500;
	}

	.color-a i {
		width: 31px;
		height: 5px;
		background: #fff;
		margin-top: 2px;
	}

	.pilcrow {
		font-family: 'Liberation Sans', sans-serif;
		font-size: 35px;
		font-weight: 700;
		line-height: 1;
	}

	.pilcrow small {
		font-size: 30px;
	}

	.chain {
		fill: none;
		stroke: #fff;
		stroke-width: 3;
	}

	.arrow {
		fill: none;
		stroke: #fff;
		stroke-width: 3.500;
		stroke-linecap: round;
		stroke-linejoin: round;
	}

	.merge {
		width: 212px;
		box-sizing: border-box;
		padding: 2px 0 0 18px;
		font-size: 24px;
		letter-spacing: 0.200px;
	}

	.callouts {
		position: absolute;
		left: -2px;
		top: -98px;
		pointer-events: none;
	}

	.callout-num {
		font-family: 'Open Sans', sans-serif;
		font-weight: 700;
		font-size: 44px;
		text-anchor: middle;
		fill: #111;
	}

	.scissors {
		flex: none;
	}

	/* footer */
	.footer {
		flex: 1;
		margin-top: 11px;
		border-top: 3px solid #efefef;
		background: #f7f7f7;
		display: flex;
		align-items: center;
		justify-content: space-between;
		padding: 0 49px 2px 116px;
		font-family: Lato, sans-serif;
		font-size: 25px;
		letter-spacing: -0.550px;
		color: #8a8a8a;
	}

	.footer a {
		color: #3eabc4;
	}

	.sep {
		margin: 0 6px;
		color: #8a8a8a;
	}
</style>
